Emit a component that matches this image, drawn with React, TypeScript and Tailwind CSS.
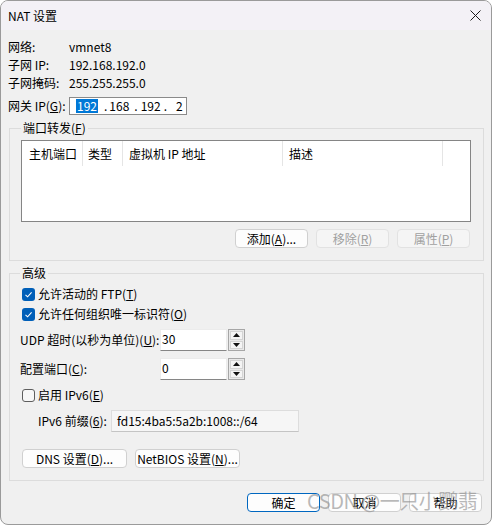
import React from 'react';

const font = { fontFamily: '"Noto Sans CJK SC", "Noto Sans", sans-serif' };

function Btn({ children, w = 'w-[73px]', disabled = false, focus = false }: { children: React.ReactNode; w?: string; disabled?: boolean; focus?: boolean }) {
  return (
    <div
      className={`${w} h-[19px] flex items-center justify-center rounded-[4px] border text-[12px] leading-[16px] ${
        disabled
          ? 'bg-[#f5f5f5] border-[#e2e2e2] text-[#a0a0a0]'
          : focus
          ? 'bg-[#fdfdfd] border-[#0067c0] text-black'
          : 'bg-[#fdfdfd] border-[#d0d0d0] text-black'
      }`}
    >
      {children}
    </div>
  );
}

function Check({ checked }: { checked: boolean }) {
  return checked ? (
    <div className="w-[13px] h-[13px] rounded-[3px] bg-[#005fb8] flex items-center justify-center">
      <svg width="9" height="9" viewBox="0 0 9 9">
        <path d="M1.5 4.8 L3.6 6.8 L7.6 2.4" fill="none" stroke="white" strokeWidth="1.1" />
      </svg>
    </div>
  ) : (
    <div className="w-[13px] h-[13px] rounded-[3px] border border-[#5e5e5e] bg-[#f7f7f7]" />
  );
}

function Spin({ value }: { value: string }) {
  return (
    <div className="flex h-[22px]">
      <div className="w-[67px] h-[22px] bg-white border border-[#ececec] border-b-[#868686] pl-[1px] text-[12px] leading-[18px] text-black">
        {value}
      </div>
      <div className="ml-[1px] w-[17px] h-[22px] border border-[#a6a6a6] bg-[#e9e9e9] flex flex-col p-[1px] gap-[1px]">
        <div className="flex-1 bg-[#f4f4f4] border border-[#d4d4d4] flex items-center justify-center">
          <svg width="7" height="4" viewBox="0 0 7 4"><path d="M3.5 0 L7 4 L0 4 Z" fill="#111" /></svg>
        </div>
        <div className="flex-1 bg-[#f4f4f4] border border-[#d4d4d4] flex items-center justify-center">
          <svg width="7" height="4" viewBox="0 0 7 4"><path d="M0 0 L7 0 L3.5 4 Z" fill="#111" /></svg>
        </div>
      </div>
    </div>
  );
}

export default function App() {
  return (
    <div className="w-[492px] h-[525px] bg-[#f0f0f0] border border-[#9a9a9a] rounded-[8px] overflow-hidden relative text-black" style={font}>
      {/* Title bar */}
      <div className="h-[29px] bg-[#f3f1f6] flex items-center justify-between pl-[7px] pr-[10px]">
        <span className="text-[12px] leading-[16px]">NAT 设置</span>
        <svg width="11" height="11" viewBox="0 0 11 11">
          <path d="M0.5 0.5 L10.5 10.5 M10.5 0.5 L0.5 10.5" stroke="#1a1a1a" strokeWidth="1" />
        </svg>
      </div>

      {/* Info rows */}
      <div className="mt-[8px] pl-[7px] text-[12px] leading-[16px]">
        <div className="flex h-[18px] items-center">
          <span className="w-[61px]">网络:</span>
          <span>vmnet8</span>
        </div>
        <div className="flex h-[18px] items-center">
          <span className="w-[61px]">子网 IP:</span>
          <span>192.168.192.0</span>
        </div>
        <div className="flex h-[18px] items-center">
          <span className="w-[61px]">子网掩码:</span>
          <span>255.255.255.0</span>
        </div>
        <div className="flex h-[18px] items-center mt-[5px]">
          <span className="w-[61px]">网关 IP(<u>G</u>):</span>
          <div className="w-[118px] h-[18px] bg-white border border-[#8a8a8a] flex items-center text-[12px] leading-[14px]">
            <span className="ml-[6px] bg-[#0078d7] text-white px-[1px]">192</span>
            <span className="ml-[6px]">.</span>
            <span className="ml-[2px]">168</span>
            <span className="ml-[5px]">.</span>
            <span className="ml-[3px]">192</span>
            <span className="ml-[3px]">.</span>
            <span className="ml-[9px]">2</span>
          </div>
        </div>
      </div>

      {/* 端口转发 */}
      <fieldset className="mt-[5px] ml-[8px] w-[475px] border border-[#dcdcdc] px-[11px] pb-[12px]">
        <legend className="px-[2px] text-[12px] leading-[16px]">端口转发(<u>F</u>)</legend>
        <div className="mt-[4px] w-[450px] h-[82px] bg-white border border-[#858585]">
          <div className="flex h-[25px] text-[12px] leading-[16px]">
            <div className="w-[61px] border-r border-[#e5e5e5] pl-[7px] flex items-center">主机端口</div>
            <div className="w-[40px] border-r border-[#e5e5e5] pl-[5px] flex items-center">类型</div>
            <div className="w-[160px] border-r border-[#e5e5e5] pl-[6px] flex items-center">虚拟机 IP 地址</div>
            <div className="w-[160px] border-r border-[#e5e5e5] pl-[6px] flex items-center">描述</div>
          </div>
        </div>
        <div className="mt-[7px] flex justify-end gap-[8px] pr-[2px]">
          <Btn>添加(<u>A</u>)...</Btn>
          <Btn disabled>移除(<u>R</u>)</Btn>
          <Btn disabled>属性(<u>P</u>)</Btn>
        </div>
      </fieldset>

      {/* 高级 */}
      <fieldset className="mt-[4px] ml-[8px] w-[475px] border border-[#dcdcdc] pl-[10px] pb-[12px] text-[12px] leading-[16px]">
        <legend className="px-[2px]">高级</legend>
        <div className="mt-[3px] flex h-[20px] items-center pl-[2px] gap-[3px]">
          <Check checked />
          <span>允许活动的 FTP(<u>T</u>)</span>
        </div>
        <div className="flex h-[20px] items-center pl-[2px] gap-[3px]">
          <Check checked />
          <span>允许任何组织唯一标识符(<u>O</u>)</span>
        </div>
        <div className="mt-[5px] flex items-center">
          <span className="w-[140px]">UDP 超时(以秒为单位)(<u>U</u>):</span>
          <Spin value="30" />
        </div>
        <div className="mt-[7px] flex items-center">
          <span className="w-[140px]">配置端口(<u>C</u>):</span>
          <Spin value="0" />
        </div>
        <div className="mt-[5px] flex h-[20px] items-center pl-[2px] gap-[3px]">
          <Check checked={false} />
          <span>启用 IPv6(<u>E</u>)</span>
        </div>
        <div className="mt-[5px] flex items-center pl-[18px]">
          <span className="w-[73px]">IPv6 前缀(<u>6</u>):</span>
          <div className="w-[188px] h-[22px] bg-[#f6f6f6] border border-[#dddddd] border-b-[#c4c4c4] pl-[5px] flex items-center">
            fd15:4ba5:5a2b:1008::/64
          </div>
        </div>
        <div className="mt-[17px] flex gap-[8px] pl-[2px]">
          <Btn w="w-[105px]">DNS 设置(<u>D</u>)...</Btn>
          <Btn w="w-[105px]">NetBIOS 设置(<u>N</u>)...</Btn>
        </div>
      </fieldset>

      {/* Dialog buttons */}
      <div className="mt-[12px] flex justify-end gap-[8px] pr-[9px]">
        <Btn focus>确定</Btn>
        <Btn>取消</Btn>
        <Btn>帮助</Btn>
      </div>

      {/* Watermark */}
      <div className="absolute left-[306px] top-[488px] text-[20px] leading-[24px] tracking-[-0.5px] text-[#8a8a8a]/60 pointer-events-none whitespace-nowrap">
        CSDN @一只小鹦翡
      </div>
    </div>
  );
}
